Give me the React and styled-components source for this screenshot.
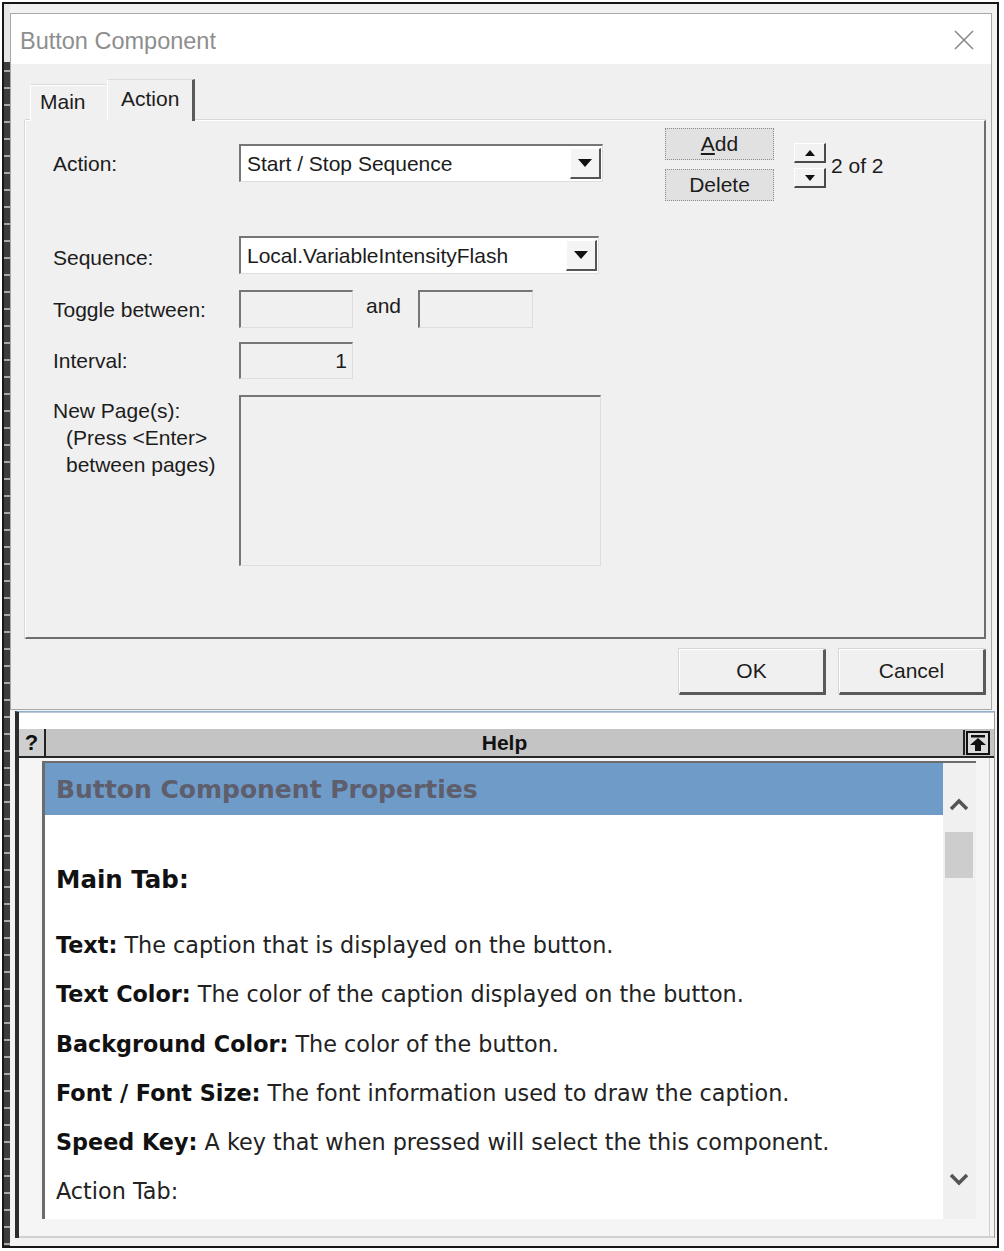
import React from 'react';
import styled, { createGlobalStyle } from 'styled-components';

const Global = createGlobalStyle`
  html, body { margin: 0; padding: 0; background: #fff; }
  body { width: 1004px; height: 1251px; overflow: hidden; font-family: "Liberation Sans", Arial, sans-serif; }
  * { box-sizing: border-box; }
`;

const Frame = styled.div`
  margin: 2px 0 0 2px;
  width: 997px;
  height: 1246px;
  border: 2px solid #161616;
  background: #f2f2f2;
  display: flex;
`;

const Strip = styled.div`
  width: 6px;
  flex: none;
  background:
    linear-gradient(#e6e6e6, #e6e6e6) top / 100% 58px no-repeat,
    repeating-linear-gradient(to bottom, #3c3c3c 0 15px, #a8a8a8 15px 17px);
`;

const Main = styled.div`
  flex: 1;
  min-width: 0;
  display: flex;
  flex-direction: column;
  padding: 9px 5px 0 0;
`;

/* ---------- dialog ---------- */
const Dialog = styled.div`
  height: 697px;
  border: 1px solid #a8a8a8;
  background: #f0f0f0;
  display: flex;
  flex-direction: column;
  color: #1c1c1c;
  font-size: 21px;
`;

const TitleBar = styled.div`
  height: 50px;
  background: #fff;
  display: flex;
  align-items: center;
  justify-content: space-between;
  padding: 2px 16px 0 9px;
`;

const Title = styled.span`
  font-size: 23.5px;
  color: #8e8e8e;
  padding-top: 3px;
`;

const Body = styled.div`
  flex: 1;
  display: flex;
  flex-direction: column;
  padding: 15px 5px 0 14px;
`;

const TabRow = styled.div`
  display: flex;
  align-items: flex-end;
  padding-left: 5px;
  height: 42px;
  margin-bottom: -1px;
  position: relative;
  z-index: 1;
`;

const Tab = styled.div`
  height: ${p => (p.$active ? 42 : 37)}px;
  width: ${p => p.$w}px;
  padding-left: ${p => p.$pl}px;
  display: flex;
  align-items: center;
  padding-bottom: ${p => (p.$active ? 4 : 2)}px;
  background: #f0f0f0;
  border-style: solid;
  border-color: #dcdcdc #5a5a5a transparent #fff;
  border-width: 1px ${p => (p.$active ? 3 : 0)}px 0 1px;
  box-shadow: ${p => (p.$active ? 'none' : 'inset 0 1px 0 #fff')};
`;

const Panel = styled.div`
  height: 519px;
  background: #f0f0f0;
  border-style: solid;
  border-width: 1px 2px 2px 1px;
  border-color: #fff #6e6e6e #6e6e6e #fff;
  box-shadow: 0 -1px 0 #d8d8d8, -1px 0 0 #d8d8d8;
  display: flex;
  align-items: flex-start;
  padding: 7px 0 0 27px;
`;

const Form = styled.div`
  width: 550px;
  margin-top: 16px;
  display: flex;
  flex-direction: column;
`;

const Row = styled.div`
  display: flex;
  align-items: ${p => (p.$top ? 'flex-start' : 'center')};
  margin-top: ${p => p.$mt || 0}px;
`;

const Label = styled.div`
  width: 186px;
  flex: none;
  line-height: 27px;
  padding-top: ${p => p.$pt || 0}px;
  white-space: nowrap;
`;

const Sub = styled.span`
  display: block;
  padding-left: 13px;
`;

const Field = styled.div`
  width: ${p => p.$w}px;
  height: ${p => p.$h}px;
  background: ${p => (p.$white ? '#fff' : '#f0f0f0')};
  border-style: solid;
  border-width: 2px 1px 1px 2px;
  border-color: #767676 #dedede #dedede #767676;
  display: flex;
  align-items: center;
  justify-content: ${p => (p.$right ? 'flex-end' : 'flex-start')};
  padding: ${p => (p.$white ? '0 1px 0 6px' : '0 5px')};
  white-space: nowrap;
`;

const DropBtn = styled.div`
  margin-left: auto;
  width: 31px;
  height: 31px;
  background: #f4f4f4;
  border-style: solid;
  border-width: 1px 2px 2px 1px;
  border-color: #fff #555 #555 #fff;
  display: flex;
  align-items: center;
  justify-content: center;
`;

const And = styled.span`
  margin: -6px 17px 0 13px;
`;

const Cluster = styled.div`
  margin-left: 62px;
  display: flex;
  align-items: flex-start;
`;

const BtnStack = styled.div`
  display: flex;
  flex-direction: column;
  gap: 9px;
`;

const SmallBtn = styled.div`
  width: 109px;
  height: 32px;
  background: #e1e1e1;
  border: 1px dotted #8c8c8c;
  display: flex;
  align-items: center;
  justify-content: center;
`;

const SpinGroup = styled.div`
  margin: 15px 0 0 20px;
  display: flex;
  align-items: center;
`;

const SpinCol = styled.div`
  display: flex;
  flex-direction: column;
  gap: 5px;
`;

const SpinBtn = styled.div`
  width: 32px;
  height: 20px;
  background: #f2f2f2;
  border-style: solid;
  border-width: 1px 2px 2px 1px;
  border-color: #fff #4a4a4a #4a4a4a #fff;
  display: flex;
  align-items: center;
  justify-content: center;
`;

const Count = styled.span`
  margin-left: 5px;
`;

const Footer = styled.div`
  display: flex;
  justify-content: flex-end;
  gap: 13px;
  margin-top: 10px;
`;

const DlgBtn = styled.div`
  width: 147px;
  height: 46px;
  background: #f0f0f0;
  border-style: solid;
  border-width: 1px 3px 3px 1px;
  border-color: #fff #5a5a5a #5a5a5a #fff;
  box-shadow: -1px -1px 0 #d6d6d6;
  display: flex;
  align-items: center;
  justify-content: center;
  font-size: 21px;
`;

/* ---------- help ---------- */
const HelpWin = styled.div`
  margin: 1px -3px 0 5px;
  height: 527px;
  display: flex;
  flex-direction: column;
  background: #fff;
  border-top: 1px solid #8fb0d0;
  border-left: 4px solid #2c2c2c;
  border-right: 1px solid #9a9a9a;
`;

const HelpTop = styled.div`
  height: 17px;
  background: #fff;
  border-top: 1px solid #b8c8d8;
`;

const HelpBar = styled.div`
  height: 29px;
  display: flex;
  align-items: stretch;
  background: #c4c4c4;
  border-bottom: 2px solid #262626;
  font-weight: bold;
  font-size: 22px;
  color: #111;
`;

const QBox = styled.div`
  width: 27px;
  background: #cfcfcf;
  border-right: 2px solid #222;
  display: flex;
  align-items: center;
  justify-content: center;
`;

const BarTitle = styled.div`
  flex: 1;
  display: flex;
  align-items: center;
  justify-content: center;
  font-size: 21px;
`;

const Pin = styled.div`
  width: 28px;
  margin: 1px 3px 1px 0;
  border-left: 2px solid #222;
  display: flex;
  align-items: center;
  justify-content: center;
`;

const HelpBody = styled.div`
  flex: 1;
  display: flex;
  background: #f5f5f5;
  padding: 3px 18px 19px 23px;
  box-shadow: inset 0 -2px 0 #d0d0d0, inset -4px 0 0 #f5f5f5, inset -5px 0 0 #cfcfcf;
`;

const ContentFrame = styled.div`
  flex: 1;
  display: flex;
  border-left: 3px solid #6c6c6c;
  border-top: 2px solid #6c6c6c;
  min-height: 0;
`;

const Article = styled.div`
  flex: 1;
  background: #fff;
  overflow: hidden;
  font-family: "DejaVu Sans", Verdana, sans-serif;
  color: #222;
`;

const Banner = styled.div`
  height: 52px;
  background: #6f9bc9;
  color: #5e5e6c;
  font-weight: bold;
  font-size: 25px;
  line-height: 54px;
  padding-left: 11px;
  white-space: nowrap;
`;

const SectionTitle = styled.div`
  margin-top: 50px;
  padding-left: 11px;
  font-size: 24.5px;
  font-weight: bold;
  line-height: 30px;
  color: #111;
`;

const Paras = styled.div`
  margin-top: 36px;
  padding-left: 11px;
  display: flex;
  flex-direction: column;
  gap: 21.3px;
`;

const Para = styled.div`
  font-size: 22.3px;
  line-height: 28px;
  white-space: nowrap;
  b { color: #111; }
`;

const Scroll = styled.div`
  width: 33px;
  background: #f0f0f0;
  display: flex;
  flex-direction: column;
  align-items: center;
  padding: 32px 2px 30px 0;
`;

const Thumb = styled.div`
  width: 28px;
  height: 46px;
  margin-top: 17px;
  background: #cdcdcd;
`;

const Spacer = styled.div`
  flex: 1;
`;

const Tri = ({ up }) => (
  <svg width="10" height="6" viewBox="0 0 10 6">
    <polygon points={up ? '5,0 10,6 0,6' : '0,0 10,0 5,6'} fill="#111" />
  </svg>
);

const Chevron = ({ up }) => (
  <svg width="22" height="20" viewBox="0 0 22 20">
    <polyline
      points={up ? '3,14 11,6 19,14' : '3,6 11,14 19,6'}
      fill="none"
      stroke="#555"
      strokeWidth="3.5"
    />
  </svg>
);

const Select = ({ w, children }) => (
  <Field $w={w} $h={38} $white>
    {children}
    <DropBtn>
      <svg width="14" height="8" viewBox="0 0 14 8">
        <polygon points="0,0 14,0 7,8" fill="#111" />
      </svg>
    </DropBtn>
  </Field>
);

export default function App() {
  return (
    <>
      <Global />
      <Frame>
        <Strip />
        <Main>
          <Dialog>
            <TitleBar>
              <Title>Button Component</Title>
              <svg width="22" height="22" viewBox="0 0 22 22">
                <path d="M2 2 L20 20 M20 2 L2 20" stroke="#8a8a8a" strokeWidth="1.6" />
              </svg>
            </TitleBar>
            <Body>
              <TabRow>
                <Tab $w={77} $pl={9}>Main</Tab>
                <Tab $active $w={88} $pl={13}>Action</Tab>
              </TabRow>
              <Panel>
                <Form>
                  <Row>
                    <Label>Action:</Label>
                    <Select w={364}>Start / Stop Sequence</Select>
                  </Row>
                  <Row $mt={54}>
                    <Label $pt={4}>Sequence:</Label>
                    <Select w={360}>Local.VariableIntensityFlash</Select>
                  </Row>
                  <Row $mt={16}>
                    <Label>Toggle between:</Label>
                    <Field $w={114} $h={38} />
                    <And>and</And>
                    <Field $w={115} $h={38} />
                  </Row>
                  <Row $mt={14}>
                    <Label>Interval:</Label>
                    <Field $w={114} $h={37} $right>1</Field>
                  </Row>
                  <Row $mt={16} $top>
                    <Label $pt={2}>
                      New Page(s):
                      <Sub>(Press &lt;Enter&gt;</Sub>
                      <Sub>between pages)</Sub>
                    </Label>
                    <Field $w={362} $h={171} />
                  </Row>
                </Form>
                <Cluster>
                  <BtnStack>
                    <SmallBtn><span><u>A</u>dd</span></SmallBtn>
                    <SmallBtn>Delete</SmallBtn>
                  </BtnStack>
                  <SpinGroup>
                    <SpinCol>
                      <SpinBtn><Tri up /></SpinBtn>
                      <SpinBtn><Tri /></SpinBtn>
                    </SpinCol>
                    <Count>2 of 2</Count>
                  </SpinGroup>
                </Cluster>
              </Panel>
              <Footer>
                <DlgBtn>OK</DlgBtn>
                <DlgBtn>Cancel</DlgBtn>
              </Footer>
            </Body>
          </Dialog>

          <HelpWin>
            <HelpTop />
            <HelpBar>
              <QBox>?</QBox>
              <BarTitle>Help</BarTitle>
              <Pin>
                <svg width="24" height="24" viewBox="0 0 24 24">
                  <rect x="1" y="1" width="22" height="22" fill="#dcdcdc" stroke="#111" strokeWidth="2" />
                  <rect x="5" y="4" width="14" height="2.5" fill="#111" />
                  <polygon points="12,7 4,14 9,14 9,20 15,20 15,14 20,14" fill="#111" />
                </svg>
              </Pin>
            </HelpBar>
            <HelpBody>
              <ContentFrame>
                <Article>
                  <Banner>Button Component Properties</Banner>
                  <SectionTitle>Main Tab:</SectionTitle>
                  <Paras>
                    <Para><b>Text:</b> The caption that is displayed on the button.</Para>
                    <Para><b>Text Color:</b> The color of the caption displayed on the button.</Para>
                    <Para><b>Background Color:</b> The color of the button.</Para>
                    <Para><b>Font / Font Size:</b> The font information used to draw the caption.</Para>
                    <Para><b>Speed Key:</b> A key that when pressed will select the this component.</Para>
                    <Para>Action Tab:</Para>
                  </Paras>
                </Article>
                <Scroll>
                  <Chevron up />
                  <Thumb />
                  <Spacer />
                  <Chevron />
                </Scroll>
              </ContentFrame>
            </HelpBody>
          </HelpWin>
        </Main>
      </Frame>
    </>
  );
}
